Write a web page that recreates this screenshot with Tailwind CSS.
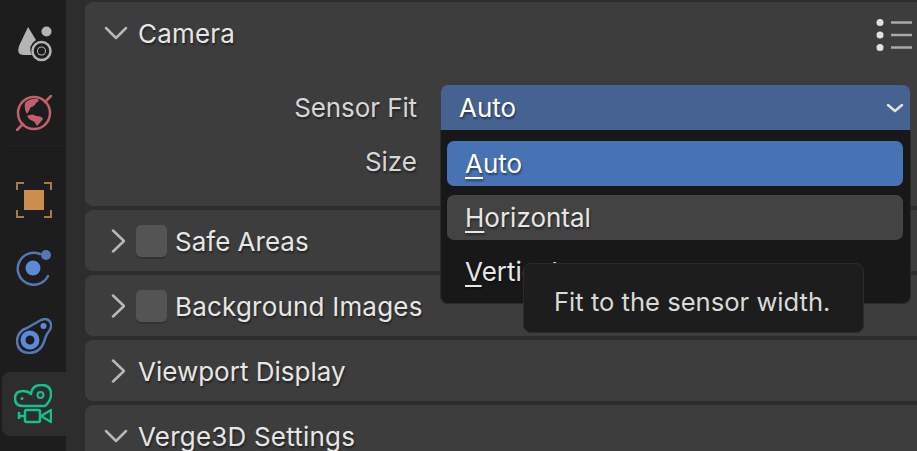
<!DOCTYPE html>
<html>
  <head>
    <script src="https://cdn.jsdelivr.net/npm/@tailwindcss/browser@4"></script>
  </head>
  <body class="bg-[#2d2d2d]">
    <div class="relative flex w-[917px] h-[451px] overflow-hidden bg-[#2d2d2d] font-['Inter',sans-serif] text-[26px] leading-none text-[#e6e6e6] [text-shadow:1px_2px_2px_rgba(0,0,0,0.45)]">

      <!-- tabs -->
      <div class="w-[66px] h-full shrink-0 bg-[#1d1d1d] flex flex-col">
        <div class="h-[146px] pl-[16px] pt-[26px] flex flex-col gap-[33px] rounded-bl-[8px] border-b border-[#232323]">
          <svg width="36" height="36" viewBox="0 0 36 36">
            <path d="M12 1 L3 20 Q0 29 8 29 L16 29 Q11 20 20 14 Z" fill="#b4b4b4"/>
            <circle cx="30.500" cy="5.500" r="5" fill="#b4b4b4"/>
            <circle cx="25.500" cy="25" r="9" fill="#1d1d1d" stroke="#b4b4b4" stroke-width="2.500"/>
            <circle cx="25.500" cy="25" r="4.500" fill="#b4b4b4"/>
            <circle cx="25.500" cy="25" r="3.500" fill="#1d1d1d"/>
          </svg>
          <svg width="36" height="36" viewBox="0 0 36 36">
            <circle cx="18" cy="18" r="16" fill="none" stroke="#c0606e" stroke-width="2.500"/>
            <path d="M7 29 L1 35 M29 7 L35 1" stroke="#c0606e" stroke-width="2.500" stroke-linecap="round"/>
            <path d="M9 8 Q14 3 22 4 Q24 6 20 8 Q18 12 15 12 Q13 16 11 19 Q8 14 9 8 Z" fill="#c0606e"/>
            <path d="M11 21 Q17 18 20 21 Q26 21 27 24 Q24 28 21 31 Q18 26 17 26 Q13 25 11 21 Z" fill="#c0606e"/>
          </svg>
        </div>
        <div class="pl-[16px] pt-[36px] flex flex-col gap-[32px]">
          <svg width="36" height="36" viewBox="0 0 36 36">
            <path d="M1 8 V1 H8 M28 1 H35 V8 M35 28 V35 H28 M8 35 H1 V28" fill="none" stroke="#a87a52" stroke-width="2"/>
            <rect x="8" y="8" width="20" height="20" fill="#cc8e50"/>
          </svg>
          <svg width="36" height="36" viewBox="0 0 36 36">
            <path d="M24 4 A16 16 0 1 0 32 26" fill="none" stroke="#5578b4" stroke-width="2.500" stroke-linecap="round"/>
            <circle cx="17" cy="18" r="7.500" fill="#5b8ad8"/>
            <circle cx="30" cy="5" r="5" fill="#5578b4"/>
          </svg>
          <svg width="36" height="36" viewBox="0 0 36 36">
            <path d="M25 2 Q33 -1 35 6 Q36 10 31 16 Q29 20 28 24 Q24 35 13 35 Q1 34 1 22 Q2 13 11 10 Z" fill="none" stroke="#5578b4" stroke-width="2.500" stroke-linejoin="round"/>
            <circle cx="14" cy="22" r="7" fill="none" stroke="#5b8ad8" stroke-width="5"/>
            <circle cx="27.500" cy="8" r="3" fill="#5b8ad8"/>
          </svg>
        </div>
        <div class="mt-[18px] ml-[2px] w-[64px] h-[64px] shrink-0 bg-[#2d2d2d] rounded-l-[8px] pl-[12px] pt-[12px]">
          <svg width="38" height="40" viewBox="0 0 38 40">
            <path d="M9 22 Q1 22 1 14.500 Q1 7 9 7 Q14 7 17 10 Q18 1 27.500 1 Q37 1 37 10 Q37 16 33 20 Q32 22 30 22 Z" fill="none" stroke="#14c08c" stroke-width="2.500" stroke-linejoin="round"/>
            <circle cx="26.500" cy="11" r="3" fill="none" stroke="#14c08c" stroke-width="2"/>
            <circle cx="8" cy="14.500" r="1.500" fill="#14c08c"/>
            <rect x="11" y="26" width="15" height="12" rx="1.500" fill="none" stroke="#14c08c" stroke-width="2.500"/>
            <path d="M5 32 H11 M5 28 V35" stroke="#14c08c" stroke-width="2.500" fill="none"/>
            <path d="M27 32 L37 26 V38 Z" fill="none" stroke="#14c08c" stroke-width="2.500" stroke-linejoin="round"/>
          </svg>
        </div>
      </div>

      <!-- panels -->
      <div class="flex-1 ml-[19px] pt-[2px] flex flex-col gap-[4px]">
        <section class="h-[204px] shrink-0 bg-[#3d3d3d] rounded-l-[8px]">
          <div class="h-[62px] flex items-center relative">
            <svg width="24" height="14" viewBox="0 0 24 14" class="ml-[19px] mr-[10px]"><path d="M2 2 L12 12 L22 2" fill="none" stroke="#b8b8b8" stroke-width="2.500" stroke-linecap="round" stroke-linejoin="round"/></svg>
            <span class="mt-[2px] tracking-[0.2px]">Camera</span>
            <svg width="36" height="34" viewBox="0 0 36 34" class="ml-auto mr-[5px] mt-[3px]">
              <circle cx="4" cy="4.500" r="3.500" fill="#e0e0e0"/><circle cx="4" cy="17" r="3.500" fill="#e0e0e0"/><circle cx="4" cy="29.500" r="3.500" fill="#e0e0e0"/>
              <path d="M15 4.500 H36 M15 17 H36 M15 29.500 H36" stroke="#a8a8a8" stroke-width="2.500"/>
            </svg>
          </div>
          <div class="flex mt-[21px]">
            <div class="w-[332px] text-right text-[#d6d6d6] flex flex-col gap-[28px] pt-[10px]">
              <span class="tracking-[-0.1px]">Sensor Fit</span>
              <span>Size</span>
            </div>
            <div class="ml-[24px] w-[469px] h-[45px] bg-[#456291] rounded-t-[7px] flex items-center pl-[18px] text-white">
              Auto
              <svg width="18" height="10" viewBox="0 0 18 10" class="ml-auto mr-[6px]"><path d="M2 2 L9 8 L16 2" fill="none" stroke="#e2e2e2" stroke-width="2.500" stroke-linecap="round" stroke-linejoin="round"/></svg>
            </div>
          </div>
        </section>

        <section class="h-[61px] shrink-0 bg-[#3d3d3d] rounded-l-[8px] flex items-center">
          <svg width="14" height="24" viewBox="0 0 14 24" class="ml-[26px] mr-[11px]"><path d="M2 1.500 L13 12 L2 22.500" fill="none" stroke="#b8b8b8" stroke-width="2.500" stroke-linecap="round" stroke-linejoin="round"/></svg>
          <span class="w-[31px] h-[32px] bg-[#545454] rounded-[5px] mr-[8px] shadow-[0_2px_0_#333]"></span>
          <span class="mt-[2px]">Safe Areas</span>
        </section>
        <section class="h-[61px] shrink-0 bg-[#3d3d3d] rounded-l-[8px] flex items-center">
          <svg width="14" height="24" viewBox="0 0 14 24" class="ml-[26px] mr-[11px]"><path d="M2 1.500 L13 12 L2 22.500" fill="none" stroke="#b8b8b8" stroke-width="2.500" stroke-linecap="round" stroke-linejoin="round"/></svg>
          <span class="w-[31px] h-[32px] bg-[#545454] rounded-[5px] mr-[8px] shadow-[0_2px_0_#333]"></span>
          <span class="mt-[2px] tracking-[0.2px]">Background Images</span>
        </section>
        <section class="h-[61px] shrink-0 bg-[#3d3d3d] rounded-l-[8px] flex items-center">
          <svg width="14" height="24" viewBox="0 0 14 24" class="ml-[26px] mr-[13px]"><path d="M2 1.500 L13 12 L2 22.500" fill="none" stroke="#b8b8b8" stroke-width="2.500" stroke-linecap="round" stroke-linejoin="round"/></svg>
          <span class="mt-[2px]">Viewport Display</span>
        </section>
        <section class="h-[61px] shrink-0 bg-[#3d3d3d] rounded-l-[8px] flex items-center">
          <svg width="24" height="14" viewBox="0 0 24 14" class="ml-[19px] mr-[10px]"><path d="M2 2 L12 12 L22 2" fill="none" stroke="#b8b8b8" stroke-width="2.500" stroke-linecap="round" stroke-linejoin="round"/></svg>
          <span class="mt-[2px] tracking-[0.2px]">Verge3D Settings</span>
        </section>
      </div>

      <!-- dropdown -->
      <div class="absolute left-[440px] top-[130px] w-[471px] h-[174px] bg-[#181818] rounded-b-[8px] border border-t-0 border-[#2a2a2a] pl-[6px] pr-[7px] pt-[11px] flex flex-col gap-[9px]">
        <div class="h-[45px] shrink-0 bg-[#4772b3] rounded-[7px] flex items-center pl-[18px] text-white"><span><u class="underline-offset-[4px] decoration-2">A</u>uto</span></div>
        <div class="h-[45px] shrink-0 bg-[#434343] rounded-[7px] flex items-center pl-[18px]"><span><u class="underline-offset-[4px] decoration-2">H</u>orizontal</span></div>
        <div class="h-[45px] shrink-0 flex items-center pl-[18px]"><span><u class="underline-offset-[4px] decoration-2">V</u>ertical</span></div>
      </div>

      <!-- tooltip -->
      <div class="absolute left-[523px] top-[263px] w-[341px] h-[70px] bg-[#1d1d1d] border border-[#2b2b2b] rounded-[8px] flex items-center pl-[30px] pt-[8px] text-[25.6px] text-[#d9d9d9] [text-shadow:none]">Fit to the sensor width.</div>
    </div>
  </body>
</html>
